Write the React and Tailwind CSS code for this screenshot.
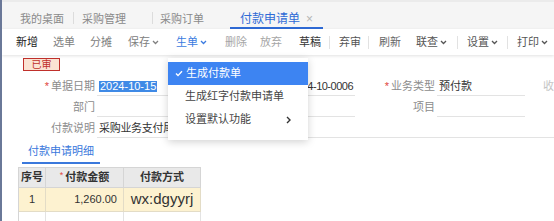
import React from 'react';

const font = "font-['Liberation_Sans','Noto_Sans_CJK_SC',sans-serif]";

function Chevron({ className = '' }) {
  return (
    <svg width="7" height="5" viewBox="0 0 7 5" className={className}>
      <path d="M1 1l2.5 2.5L6 1" fill="none" stroke="currentColor" strokeWidth="1.3" />
    </svg>
  );
}

const tools = [
  { label: '新增', cls: 'ml-[14px] text-[#222]' },
  { label: '选单', cls: 'ml-[15px] text-[#808080]' },
  { label: '分摊', cls: 'ml-[15px] text-[#808080]' },
  { label: '保存', cls: 'ml-[16px] text-[#808080]', menu: true },
  { label: '生单', cls: 'ml-[17px] text-[#3b7be0]', menu: true },
  { label: '删除', cls: 'ml-[18px] text-[#a6a6a6]' },
  { label: '放弃', cls: 'ml-[13px] text-[#a6a6a6]' },
  { label: '草稿', cls: 'ml-[17px] text-[#333]' },
  { sep: true, cls: 'ml-[8px]' },
  { label: '弃审', cls: 'ml-[9px] text-[#555]' },
  { sep: true, cls: 'ml-[7px]' },
  { label: '刷新', cls: 'ml-[10px] text-[#666]' },
  { label: '联查', cls: 'ml-[15px] text-[#555]', menu: true },
  { sep: true, cls: 'ml-[10px]' },
  { label: '设置', cls: 'ml-[9px] text-[#555]', menu: true },
  { sep: true, cls: 'ml-[9px]' },
  { label: '打印', cls: 'ml-[9px] text-[#555]', menu: true },
];

function Field({ label, required, value, labelCls = '', inputCls = 'w-[88px]', children }) {
  return (
    <div className="flex h-full shrink-0 items-center">
      <div className={`w-[82px] shrink-0 pr-[2px] text-right text-[#8c8c8c] ${labelCls}`}>
        {required && <span className="mr-[2px] text-[#e0463c]">*</span>}
        {label}
      </div>
      <div className={`flex h-[19px] shrink-0 items-center border-b border-[#e3e3e3] pl-[2px] text-[#333] ${inputCls}`}>
        {children ?? value}
      </div>
    </div>
  );
}

export default function App() {
  return (
    <div className={`relative h-[221px] w-[554px] overflow-hidden border-l-2 border-[#6a7898] bg-white text-[11px] ${font}`}>
      {/* Tabs */}
      <div className="flex h-[29px] items-end border-t-[2px] border-[#ebebeb] bg-[#f5f5f5] text-[#8a8a8a]">
        <span className="mb-[2px] ml-[18px] h-[16px] leading-[16px]">我的桌面</span>
        <span className="mb-[5px] ml-[9px] h-[12px] w-px bg-[#dcdcdc]" />
        <span className="mb-[2px] ml-[8px] h-[16px] leading-[16px]">采购管理</span>
        <span className="mb-[5px] ml-[26px] h-[12px] w-px bg-[#dcdcdc]" />
        <span className="mb-[2px] ml-[7px] h-[16px] leading-[16px]">采购订单</span>
        <div className="ml-[26px] flex h-[18px] items-start border-b-2 border-[#2f6bd6] px-[10px]">
          <span className="h-[16px] text-[12px] leading-[16px] text-[#2f6bd6]">付款申请单</span>
          <span className="ml-[6px] h-[16px] text-[12px] leading-[16px] text-[#b5b5b5]">×</span>
        </div>
      </div>

      {/* Toolbar */}
      <div className="relative z-10 flex h-[26px] items-center bg-white shadow-[0_1px_3px_rgba(0,0,0,0.12)]">
        {tools.map((t, i) =>
          t.sep ? (
            <span key={i} className={`h-[13px] w-px bg-[#e2e2e2] ${t.cls}`} />
          ) : (
            <span key={i} className={`flex items-center ${t.cls}`}>
              {t.label}
              {t.menu && <Chevron className="ml-[2px]" />}
            </span>
          )
        )}
      </div>

      {/* Form */}
      <div className="mt-[3px] ml-[21px] flex h-[13px] w-[37px] items-center justify-center border border-[#c0302b] bg-[#fbe3d3] text-[10px] leading-none text-[#c0302b]">
        已审
      </div>

      <div className="mt-[5px] ml-[13px]">
        <div className="flex h-[21px]">
          <Field label="单据日期" required>
            <span className="bg-[#3f8ae6] px-px leading-[11px] text-white">2024-10-15</span>
          </Field>
          <Field label="" value="FK2024-10-0006" inputCls="w-[88px] justify-end pr-[2px] tracking-[-0.5px]" />
          <Field label="业务类型" required value="预付款" />
          <Field label="收" labelCls="!text-left pl-[18px] text-[#c4c4c4]" value="" inputCls="w-[88px] border-transparent" />
        </div>
        <div className="flex h-[21px]">
          <Field label="部门" value="" />
          <Field label="" value="" />
          <Field label="项目" value="" />
        </div>
        <div className="flex h-[21px]">
          <Field label="付款说明" value="采购业务支付尾款" inputCls="w-[460px] tracking-[-0.3px]" />
        </div>
      </div>

      {/* Sub tab */}
      <div className="mt-[2px] ml-[20px] flex h-[23px] w-[78px] items-center justify-center border-b-2 border-[#3a78dc] text-[#3a78dc]">
        付款申请明细
      </div>

      {/* Table */}
      <div className="mt-[3px] ml-[16px] w-[183px] border-t border-l border-[#d5d5d5] text-[#333]">
        <div className="grid h-[20px] grid-cols-[27px_78px_77px] bg-[#e9e9e9] font-bold">
          <div className="flex items-center justify-center border-r border-b border-[#d5d5d5]">序号</div>
          <div className="flex items-center justify-center border-r border-b border-[#d5d5d5]">
            <span className="mr-[2px] -mt-[4px] text-[9px] font-normal text-[#e0463c]">*</span>付款金额
          </div>
          <div className="flex items-center justify-center border-r border-b border-[#d5d5d5]">付款方式</div>
        </div>
        <div className="grid h-[24px] grid-cols-[27px_78px_77px] bg-[#fdf2d0]">
          <div className="flex items-center justify-center border-r border-b border-[#e3dcc6]">1</div>
          <div className="flex items-center justify-end border-r border-b border-[#e3dcc6] pr-[6px]">1,260.00</div>
          <div className="flex items-center justify-center border-r border-b border-[#e3dcc6] text-[15px]">wx:dgyyrj</div>
        </div>
        <div className="grid h-[20px] grid-cols-[27px_78px_77px] bg-white">
          <div className="border-r border-[#e3e3e3]" />
          <div className="border-r border-[#e3e3e3]" />
          <div className="border-r border-[#e3e3e3]" />
        </div>
      </div>

      {/* Dropdown menu */}
      <div className="absolute top-[58px] left-[166px] z-20 w-[140px] bg-white pt-[4px] pb-[9px] text-[#444] shadow-[0_2px_8px_rgba(0,0,0,0.18)]">
        <div className="flex h-[23px] items-center bg-[#3d84f2] pl-[7px] text-white">
          <svg width="8" height="7" viewBox="0 0 8 7" className="mr-[3px]">
            <path d="M1 3.6l2 2L7 1.2" fill="none" stroke="currentColor" strokeWidth="1.4" />
          </svg>
          生成付款单
        </div>
        <div className="flex h-[23px] items-center pl-[17px]">生成红字付款申请单</div>
        <div className="flex h-[23px] items-center justify-between pr-[17px] pl-[17px]">
          设置默认功能
          <svg width="5" height="8" viewBox="0 0 5 8">
            <path d="M1 1l3 3-3 3" fill="none" stroke="#333" strokeWidth="1.4" />
          </svg>
        </div>
      </div>
    </div>
  );
}
